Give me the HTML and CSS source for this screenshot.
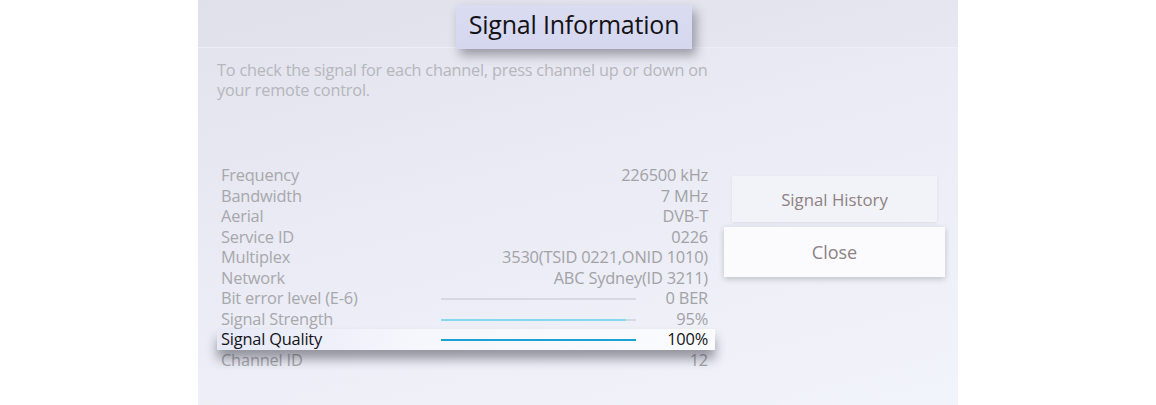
FILE: index.html
```html
<!DOCTYPE html>
<html lang="en">
<head>
  <meta charset="UTF-8">
  <meta name="viewport" content="width=device-width, initial-scale=1.0">
  <title>Signal Information</title>
  <link rel="stylesheet" href="styles.css">
</head>
<body>
  <div class="panel">
    <header class="head">
      <h1 class="title">Signal Information</h1>
    </header>
    <p class="desc">To check the signal for each channel, press channel up or down on your remote control.</p>
    <div class="content">
      <ul class="info">
        <li class="row"><span class="label">Frequency</span><span class="value">226500 kHz</span></li>
        <li class="row"><span class="label">Bandwidth</span><span class="value">7 MHz</span></li>
        <li class="row"><span class="label">Aerial</span><span class="value">DVB-T</span></li>
        <li class="row"><span class="label">Service ID</span><span class="value">0226</span></li>
        <li class="row"><span class="label">Multiplex</span><span class="value">3530(TSID 0221,ONID 1010)</span></li>
        <li class="row"><span class="label">Network</span><span class="value">ABC Sydney(ID 3211)</span></li>
        <li class="row"><span class="label">Bit error level (E-6)</span><span class="meter ber"><i style="width: 0%"></i></span><span class="value">0 BER</span></li>
        <li class="row"><span class="label">Signal Strength</span><span class="meter strength"><i style="width: 95%"></i></span><span class="value">95%</span></li>
        <li class="row focus"><span class="label">Signal Quality</span><span class="meter quality"><i style="width: 100%"></i></span><span class="value">100%</span></li>
        <li class="row"><span class="label">Channel ID</span><span class="value">12</span></li>
      </ul>
      <div class="buttons">
        <button class="btn">Signal History</button>
        <button class="btn active">Close</button>
      </div>
    </div>
  </div>
</body>
</html>
```

FILE: styles.css
```css
* {margin: 0; padding: 0; box-sizing: border-box;}

ul, li {
  list-style: none;
}
body {
  background: #fff;
  font-family: "Open Sans", "Noto Sans", sans-serif;
  display: flex;
  justify-content: center;
  height: 405px;
  overflow: hidden;
}
.panel {
  width: 760px;
  height: 405px;
  background: linear-gradient(165deg, #e1e2ec 0%, #eaebf4 45%, #f2f4fb 100%);
  padding: 0 13px 0 19px;
}
.head {
  height: 48px;
  margin: 0 -13px 0 -19px;
  border-bottom: 1px solid #edeff6;
  background: rgba(205, 207, 222, 0.08);
  display: flex;
  justify-content: center;
  padding-right: 8px;
  padding-top: 5px;
}
.title {
  height: 44px;
  padding: 0 13px;
  background: linear-gradient(180deg, #dadcf2, #d4d7ee);
  font-weight: 400;
  font-size: 25px;
  line-height: 38px;
  color: #141214;
  letter-spacing: -0.2px;
  box-shadow: 4px 6px 10px rgba(60, 60, 70, 0.45);
  position: relative;
}
.desc {
  margin-top: 12px;
  width: 510px;
  font-size: 16.3px;
  line-height: 20px;
  color: #b6b6bc;
  letter-spacing: -0.2px;
}
.content {
  display: flex;
  gap: 9px;
  margin-top: 65px;
}
.info {
  width: 498px;
}
.row {
  display: grid;
  grid-template-columns: 220px 195px 1fr;
  align-items: center;
  height: 20.5px;
  line-height: 20px;
  padding: 0 7px 0 4px;
  font-size: 16.4px;
  color: #a7a7ac;
  letter-spacing: -0.2px;
}
.value {
  grid-column: 2 / 4;
  text-align: right;
  white-space: nowrap;
  color: #a2a2a6;
}
.meter + .value {
  grid-column: 3;
}
.meter {
  height: 2px;
  background: #d6d9e1;
  position: relative;
  top: 1px;
}
.meter i {
  display: block;
  height: 100%;
}
.strength i {
  background: #86d8ee;
}
.quality {
  background: #1aa2d4;
}
.quality i {
  background: #1aa2d4;
}
.row.focus {
  background: linear-gradient(90deg, #e5e8f7, #f6f7fc 40%, #fafbfd);
  box-shadow: 0 9px 11px rgba(40, 40, 50, 0.45);
  color: #141316;
  position: relative;
}
.row.focus .value {
  color: #141316;
}
.buttons {
  width: 221px;
  padding-top: 11px;
  display: flex;
  flex-direction: column;
  align-items: center;
  gap: 5px;
}
.btn {
  width: 205px;
  height: 46px;
  border: none;
  background: #f2f3f8;
  font-family: inherit;
  font-size: 16.8px;
  color: #8d8183;
  box-shadow: 0 1px 3px rgba(0, 0, 0, 0.08);
}
.btn.active {
  width: 221px;
  height: 50px;
  background: #fbfbfd;
  font-size: 18px;
  box-shadow: 0 2px 6px rgba(0, 0, 0, 0.2);
}
```
